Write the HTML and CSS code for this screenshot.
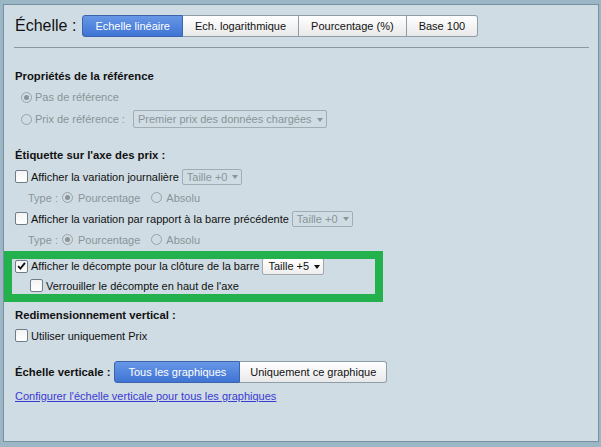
FILE: index.html
```html
<!DOCTYPE html>
<html lang="fr">
<head>
<meta charset="utf-8">
<title>Échelle</title>
<link rel="stylesheet" href="styles.css">
</head>
<body>
<div class="panel">
  <div class="header">
    <span class="h-title">Échelle :</span>
    <div class="seg">
      <span class="btn active">Echelle linéaire</span>
      <span class="btn">Ech. logarithmique</span>
      <span class="btn">Pourcentage (%)</span>
      <span class="btn">Base 100</span>
    </div>
  </div>
  <div class="rule"></div>

  <div class="sec-title t-ref">Propriétés de la référence</div>
  <div class="row r22 disabled ind-radio"><span class="radio on"></span>Pas de référence</div>
  <div class="row r22 disabled ind-radio"><span class="radio"></span>Prix de référence :<span class="select sel-ref">Premier prix des données chargées<span class="caret"></span></span></div>

  <div class="sec-title t-label">Étiquette sur l'axe des prix :</div>
  <div class="row r21"><span class="check"></span>Afficher la variation journalière<span class="select sel-small disabled-sel">Taille +0<span class="caret"></span></span></div>
  <div class="row r21 disabled ind-type">Type :<span class="radio on r-first"></span>Pourcentage<span class="radio r-second"></span>Absolu</div>
  <div class="row r21"><span class="check"></span>Afficher la variation par rapport à la barre précédente<span class="select sel-small disabled-sel">Taille +0<span class="caret"></span></span></div>
  <div class="row r21 disabled ind-type">Type :<span class="radio on r-first"></span>Pourcentage<span class="radio r-second"></span>Absolu</div>

  <div class="highlight">
    <div class="row r20"><span class="check checked"><svg viewBox="0 0 12 12" width="12" height="12"><path d="M2.3 6.2 L4.8 8.8 L9.8 2.6" fill="none" stroke="#111" stroke-width="2"/></svg></span>Afficher le décompte pour la clôture de la barre<span class="select sel-five">Taille +5<span class="caret"></span></span></div>
    <div class="row r19 ind-nested"><span class="check"></span>Verrouiller le décompte en haut de l'axe</div>
  </div>

  <div class="sec-title t-resize">Redimensionnement vertical :</div>
  <div class="row r21"><span class="check"></span>Utiliser uniquement Prix</div>

  <div class="row vscale">
    <span class="vs-label">Échelle verticale :</span>
    <div class="seg">
      <span class="btn active wide">Tous les graphiques</span>
      <span class="btn narrow">Uniquement ce graphique</span>
    </div>
  </div>
  <div class="row link-row"><a class="link" href="#">Configurer l'échelle verticale pour tous les graphiques</a></div>
</div>
</body>
</html>
```

FILE: styles.css
```css
html, body {
  margin: 0;
  padding: 0;
}
body {
  background: #9bb6c5;
  font-family: "Liberation Sans", Arial, sans-serif;
  font-size: 11px;
  color: #111;
  width: 601px;
  height: 447px;
  overflow: hidden;
}
.panel {
  position: relative;
  box-sizing: border-box;
  width: 596px;
  height: 438px;
  margin: 4px 0 0 3px;
  background: #cfdce3;
  border: 1px solid #7890a0;
  padding: 10px 10px 0 11px;
}
.header {
  display: flex;
  align-items: center;
  height: 22px;
}
.h-title {
  font-size: 16px;
  color: #111;
  margin-right: 6px;
  line-height: 22px;
}
.seg {
  display: flex;
}
.btn {
  box-sizing: border-box;
  height: 22px;
  line-height: 20px;
  padding: 0 12px;
  border: 1px solid #8e9ea9;
  border-left: none;
  background: linear-gradient(#ffffff, #e9e9e9);
  color: #111;
  white-space: nowrap;
}
.btn:first-child {
  border-left: 1px solid #8e9ea9;
  border-radius: 3px 0 0 3px;
}
.btn:last-child {
  border-radius: 0 3px 3px 0;
}
.btn.active {
  background: linear-gradient(#6797e6, #3f74d4);
  border-color: #3b64ad;
  color: #fff;
}
.btn.wide { padding: 0 13px; }
.btn.narrow { padding: 0 10px; }
.rule {
  height: 1px;
  background: #8899a4;
  margin: 10px -1px 0 -1px;
}
.sec-title {
  font-weight: bold;
  font-size: 11.3px;
  height: 20px;
  line-height: 20px;
  color: #111;
}
.t-ref { margin-top: 18px; }
.t-label { margin-top: 15px; }
.t-resize { margin-top: 10px; }
.t-ref + .row { margin-top: 0; }
.t-label + .row { margin-top: 1px; }

.row {
  display: flex;
  align-items: center;
  white-space: nowrap;
}
.r22 { height: 22px; }
.r21 { height: 21px; }
.r20 { height: 20px; }
.r19 { height: 19px; }
.disabled { color: #8a9499; }
.ind-radio { padding-left: 6px; }
.ind-type { padding-left: 13px; }
.ind-nested { padding-left: 15px; }

.radio {
  box-sizing: border-box;
  width: 11px;
  height: 11px;
  border: 1px solid #98a3a9;
  border-radius: 50%;
  margin-right: 3px;
  display: inline-flex;
  align-items: center;
  justify-content: center;
}
.radio.on::after {
  content: "";
  width: 5px;
  height: 5px;
  border-radius: 50%;
  background: #8a9499;
}
.r-first { margin-left: 4px; margin-right: 5px; }
.r-second { margin-left: 11px; margin-right: 4px; }

.check {
  box-sizing: border-box;
  width: 13px;
  height: 13px;
  border: 1px solid #6f7d87;
  border-radius: 2px;
  background: linear-gradient(#f4f4f4, #ffffff);
  margin-right: 3px;
  display: inline-flex;
  align-items: center;
  justify-content: center;
}
.check svg { display: block; }

.select {
  box-sizing: border-box;
  display: inline-flex;
  align-items: center;
  height: 16px;
  border: 1px solid #a2adb3;
  border-radius: 2px;
  padding: 0 4px 0 4px;
  margin-left: 3px;
}
.sel-ref {
  margin-left: 8px;
  height: 18px;
  color: #8a9499;
  padding-right: 3px;
}
.disabled-sel { color: #8a9499; }
.sel-small { padding-right: 3px; }
.sel-five {
  background: linear-gradient(#ffffff, #eeeeee);
  border-color: #a0a8ae;
  color: #111;
  height: 17px;
  padding: 0 3px 0 5px;
}
.caret {
  width: 0;
  height: 0;
  border-left: 3.5px solid transparent;
  border-right: 3.5px solid transparent;
  border-top: 4px solid currentColor;
  margin-left: 5px;
  margin-top: 1px;
}

.highlight {
  position: relative;
  margin-top: 6px;
}
.highlight::before {
  content: "";
  position: absolute;
  left: -11px;
  top: -5px;
  width: 379px;
  height: 51px;
  box-sizing: border-box;
  border: 8px solid #22b14c;
  pointer-events: none;
}

.vscale {
  height: 22px;
  margin-top: 15px;
}
.vs-label {
  font-weight: bold;
  font-size: 11.3px;
  margin-right: 4px;
}
.link-row {
  height: 18px;
  margin-top: 4px;
}
.link {
  color: #3a3ad4;
  text-decoration: underline;
}
```
